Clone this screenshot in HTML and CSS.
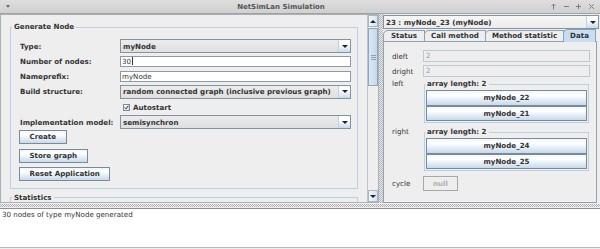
FILE: index.html
```html
<!DOCTYPE html>
<html lang="en">
<head>
    <meta charset="UTF-8">
    <title>NetSimLan Simulation</title>
    <link rel="stylesheet" href="styles.css">
</head>
<body>
<div class="window">
    <div class="titlebar">
        <div class="menu-toggle"><span class="tri-down"></span></div>
        <div class="title">NetSimLan Simulation</div>
        <div class="wm-buttons">
            <span class="wm-btn"><svg width="7" height="7" viewBox="0 0 7 7"><path d="M3.5 6.5V1 M1.5 3L3.5 1L5.5 3"/></svg></span>
            <span class="wm-btn"><svg width="7" height="7" viewBox="0 0 7 7"><path d="M1 3.5H6"/></svg></span>
            <span class="wm-btn"><svg width="7" height="7" viewBox="0 0 7 7"><path d="M1 3.5H6 M3.5 1V6"/></svg></span>
            <span class="wm-btn"><svg width="7" height="7" viewBox="0 0 7 7"><path d="M1.2 1.2L5.8 5.8 M5.8 1.2L1.2 5.8"/></svg></span>
        </div>
    </div>

    <div class="main">
        <div class="left-pane">
            <div class="viewport">
                <fieldset class="group">
                    <legend>Generate Node</legend>
                    <div class="form">
                        <label>Type:</label>
                        <div class="combo"><span class="combo-text">myNode</span><span class="combo-arrow"><i class="tri"></i></span></div>

                        <label>Number of nodes:</label>
                        <div class="field">30<span class="caret"></span></div>

                        <label>Nameprefix:</label>
                        <div class="field">myNode</div>

                        <label>Build structure:</label>
                        <div class="combo"><span class="combo-text">random connected graph (inclusive previous graph)</span><span class="combo-arrow"><i class="tri"></i></span></div>

                        <span></span>
                        <div class="check">
                            <svg width="7" height="7" viewBox="0 0 7 7">
                                <defs><linearGradient id="cb" x1="0" y1="0" x2="1" y2="1"><stop offset="0" stop-color="#ffffff"/><stop offset="1" stop-color="#c3d6ea"/></linearGradient></defs>
                                <rect x="0.5" y="0.5" width="6" height="6" fill="url(#cb)" stroke="#7a8a99"/>
                                <path d="M1.7 3.4L3 4.8L5.4 1.8" fill="none" stroke="#333" stroke-width="1"/>
                            </svg>
                            <span>Autostart</span>
                        </div>

                        <label>Implementation model:</label>
                        <div class="combo"><span class="combo-text">semisynchron</span><span class="combo-arrow"><i class="tri"></i></span></div>
                    </div>
                    <div class="buttons">
                        <button class="btn">Create</button>
                        <button class="btn">Store graph</button>
                        <button class="btn">Reset Application</button>
                    </div>
                </fieldset>
                <fieldset class="group stats">
                    <legend>Statistics</legend>
                    <div class="stats-body"></div>
                </fieldset>
            </div>
            <div class="vscroll">
                <div class="scroll-btn"><i class="tri-up"></i></div>
                <div class="track">
                    <div class="thumb"><span></span><span></span><span></span></div>
                </div>
                <div class="scroll-btn"><i class="tri"></i></div>
            </div>
        </div>

        <div class="vsplit"></div>

        <div class="right-pane">
            <div class="combo node-combo"><span class="combo-text">23 : myNode_23 (myNode)</span><span class="combo-arrow"><i class="tri"></i></span></div>
            <div class="tabs">
                <span class="tab first">Status</span>
                <span class="tab">Call method</span>
                <span class="tab">Method statistic</span>
                <span class="tab active">Data</span>
            </div>
            <div class="tab-content">
                <div class="data-grid">
                    <span class="data-label">dleft</span>
                    <div class="ro-field">2</div>

                    <span class="data-label">dright</span>
                    <div class="ro-field">2</div>

                    <span class="data-label top">left</span>
                    <fieldset class="array">
                        <legend>array length: 2</legend>
                        <button class="btn wide">myNode_22</button>
                        <button class="btn wide">myNode_21</button>
                    </fieldset>

                    <span class="data-label top">right</span>
                    <fieldset class="array">
                        <legend>array length: 2</legend>
                        <button class="btn wide">myNode_24</button>
                        <button class="btn wide">myNode_25</button>
                    </fieldset>

                    <span class="data-label">cycle</span>
                    <div class="cycle-row"><button class="btn null-btn" disabled>null</button></div>
                </div>
            </div>
        </div>
    </div>

    <div class="hsplit"></div>

    <div class="log">30 nodes of type myNode generated</div>
</div>
</body>
</html>
```

FILE: styles.css
```css
* {
    box-sizing: border-box;
}
body {
    margin: 0;
    font-family: "DejaVu Sans", Verdana, sans-serif;
    font-size: 7.1px;
    color: #333;
    background-color: #eeeeee;
}
.window {
    width: 600px;
    height: 249px;
    display: flex;
    flex-direction: column;
    overflow: hidden;
}

/* window title bar */
.titlebar {
    flex: none;
    height: 14px;
    display: flex;
    align-items: center;
    background: linear-gradient(#dedede, #d0d0d0);
    border-bottom: 1px solid #a2a2a2;
    color: #555;
}
.menu-toggle {
    width: 15px;
    display: flex;
    justify-content: center;
}
.tri-down {
    width: 0;
    height: 0;
    border-left: 2.5px solid transparent;
    border-right: 2.5px solid transparent;
    border-top: 3px solid #6e6e6e;
}
.title {
    flex: 1;
    text-align: center;
    font-weight: bold;
    font-size: 7px;
}
.wm-buttons {
    width: 53px;
    display: flex;
}
.wm-btn {
    width: 12.7px;
    display: flex;
    justify-content: center;
}
.wm-btn svg path {
    fill: none;
    stroke: #7d7d7d;
    stroke-width: 1;
}

/* main split area */
.main {
    flex: none;
    height: 189px;
    display: flex;
}
.left-pane {
    width: 379px;
    display: flex;
    border: 1px solid #a8b0b8;
}
.viewport {
    flex: 1;
    overflow: hidden;
    padding: 8px 9px 0 9px;
}
.group {
    margin: 0;
    min-width: 0;
    border: 1px solid #b8cfe5;
    padding: 8px 6px 6.5px 9px;
}
.group legend {
    font-weight: bold;
    line-height: 8px;
    padding: 0 2px;
    margin-left: -8px;
}
.stats {
    margin-top: 5px;
}
.stats-body {
    height: 40px;
}
.form {
    display: grid;
    grid-template-columns: 100px 1fr;
    grid-auto-rows: 14px;
    row-gap: 1.3px;
    align-items: center;
}
.form label {
    font-weight: bold;
}
.combo {
    height: 14px;
    display: flex;
    align-items: center;
    border: 1px solid #8393a2;
    background: linear-gradient(#ececec, #dfdfdf);
    font-weight: bold;
}
.combo-text {
    flex: 1;
    padding-left: 2px;
    white-space: nowrap;
    overflow: hidden;
}
.combo-arrow {
    width: 12px;
    height: 100%;
    display: flex;
    align-items: center;
    justify-content: center;
    border-left: 1px solid #c4d2df;
    background: linear-gradient(#f7fafd, #ffffff 35%, #c8daec);
}
.tri {
    width: 0;
    height: 0;
    border-left: 3px solid transparent;
    border-right: 3px solid transparent;
    border-top: 3px solid #222;
}
.tri-up {
    width: 0;
    height: 0;
    border-left: 3px solid transparent;
    border-right: 3px solid transparent;
    border-bottom: 3px solid #222;
}
.field {
    height: 11px;
    display: flex;
    align-items: center;
    border: 1px solid #8c9aa7;
    background-color: #fff;
    padding-left: 1px;
}
.caret {
    width: 1px;
    height: 8px;
    margin-left: 1px;
    background-color: #333;
}
.check {
    display: flex;
    align-items: center;
    gap: 3px;
    padding-left: 3px;
    font-weight: bold;
}
.buttons {
    display: flex;
    flex-direction: column;
    align-items: flex-start;
    gap: 4.5px;
    margin: 1px 0 0 -1px;
}
.btn {
    height: 14px;
    margin: 0;
    padding: 0 9.5px;
    border: 1px solid #7a8a99;
    background: linear-gradient(#f2f6fa, #ffffff 30%, #c6d9ec);
    font-family: inherit;
    font-size: 7.1px;
    font-weight: bold;
    color: #333;
    line-height: 12px;
    white-space: nowrap;
}

/* scrollbar */
.vscroll {
    width: 11px;
    display: flex;
    flex-direction: column;
    border-left: 1px solid #b8c4cf;
}
.scroll-btn {
    height: 12px;
    flex: none;
    display: flex;
    align-items: center;
    justify-content: center;
    border: 1px solid #a8b6c3;
    background: linear-gradient(90deg, #f4f8fb, #d6e3f0);
}
.track {
    flex: 1;
    background-color: #eeeeee;
}
.thumb {
    height: 58px;
    margin-top: 1px;
    display: flex;
    flex-direction: column;
    align-items: center;
    justify-content: center;
    gap: 1px;
    border: 1px solid #93a5b6;
    background: linear-gradient(90deg, #dbe8f5, #c4d8ec);
}
.thumb span {
    width: 5px;
    height: 1px;
    background-color: #8ba0b4;
}

/* dividers */
.vsplit {
    width: 4px;
    background-color: #eeeeee;
    background-image: repeating-conic-gradient(#b2b2b2 0 25%, transparent 0 50%);
    background-size: 2px 2px;
}
.hsplit {
    flex: none;
    height: 5px;
    padding: 1px 0;
    background-color: #eeeeee;
    background-image: repeating-conic-gradient(#b2b2b2 0 25%, transparent 0 50%);
    background-size: 2px 2px;
    background-clip: content-box;
}

/* right side */
.right-pane {
    flex: 1;
    display: flex;
    flex-direction: column;
    padding-top: 1px;
    min-width: 0;
}
.node-combo {
    margin-right: 1px;
    background: linear-gradient(#f6f6f6, #ececec);
}
.tabs {
    height: 12px;
    display: flex;
    align-items: flex-end;
}
.tab {
    height: 11px;
    padding: 0 6px;
    margin-right: -1px;
    border: 1px solid #8da2b5;
    border-bottom: none;
    border-top-left-radius: 5px;
    background-color: #eeeeee;
    font-weight: bold;
    line-height: 10px;
    white-space: nowrap;
}
.tab.first {
    padding-left: 7px;
    padding-right: 7px;
}
.tab.active {
    height: 13px;
    margin-bottom: -1px;
    position: relative;
    z-index: 1;
    background-color: #c8ddf2;
    line-height: 12px;
}
.tab-content {
    flex: 1;
    margin-right: 3px;
    border: 1px solid #8da2b5;
    padding: 8px 6px 0 8px;
}
.data-grid {
    display: grid;
    grid-template-columns: 31px 1fr;
    row-gap: 3px;
    align-items: center;
}
.data-label.top {
    align-self: start;
    line-height: 8px;
}
.ro-field {
    height: 12px;
    border: 1px solid #bcc8d4;
    background-color: #eeeeee;
    color: #999;
    padding-left: 2px;
    line-height: 10px;
}
.array {
    margin: 0 1px;
    min-width: 0;
    border: 1px solid #b8cfe5;
    padding: 2px 1px 1px;
}
.array + .data-label,
.array + .data-label + .array {
    margin-top: 2px;
}
.array legend {
    font-weight: bold;
    line-height: 8px;
    padding: 0 2px;
    margin-left: -1px;
}
.btn.wide {
    display: block;
    width: 100%;
    height: 15.5px;
    padding: 0;
    text-align: center;
    line-height: 13px;
}
.cycle-row {
    margin-top: 2px;
}
.null-btn {
    width: 35px;
    height: 15px;
    padding: 0;
    border-color: #a9a9a9;
    background: #eeeeee;
    color: #b0b0b0;
}
.array + .data-label + .array + .data-label {
    margin-top: 2px;
}

/* log area */
.log {
    flex: none;
    height: 40px;
    border-top: 1px solid #8e8e8e;
    border-bottom: 1px solid #b8b8b8;
    background-color: #fff;
    padding: 1px 2px;
    line-height: 9px;
}
```
